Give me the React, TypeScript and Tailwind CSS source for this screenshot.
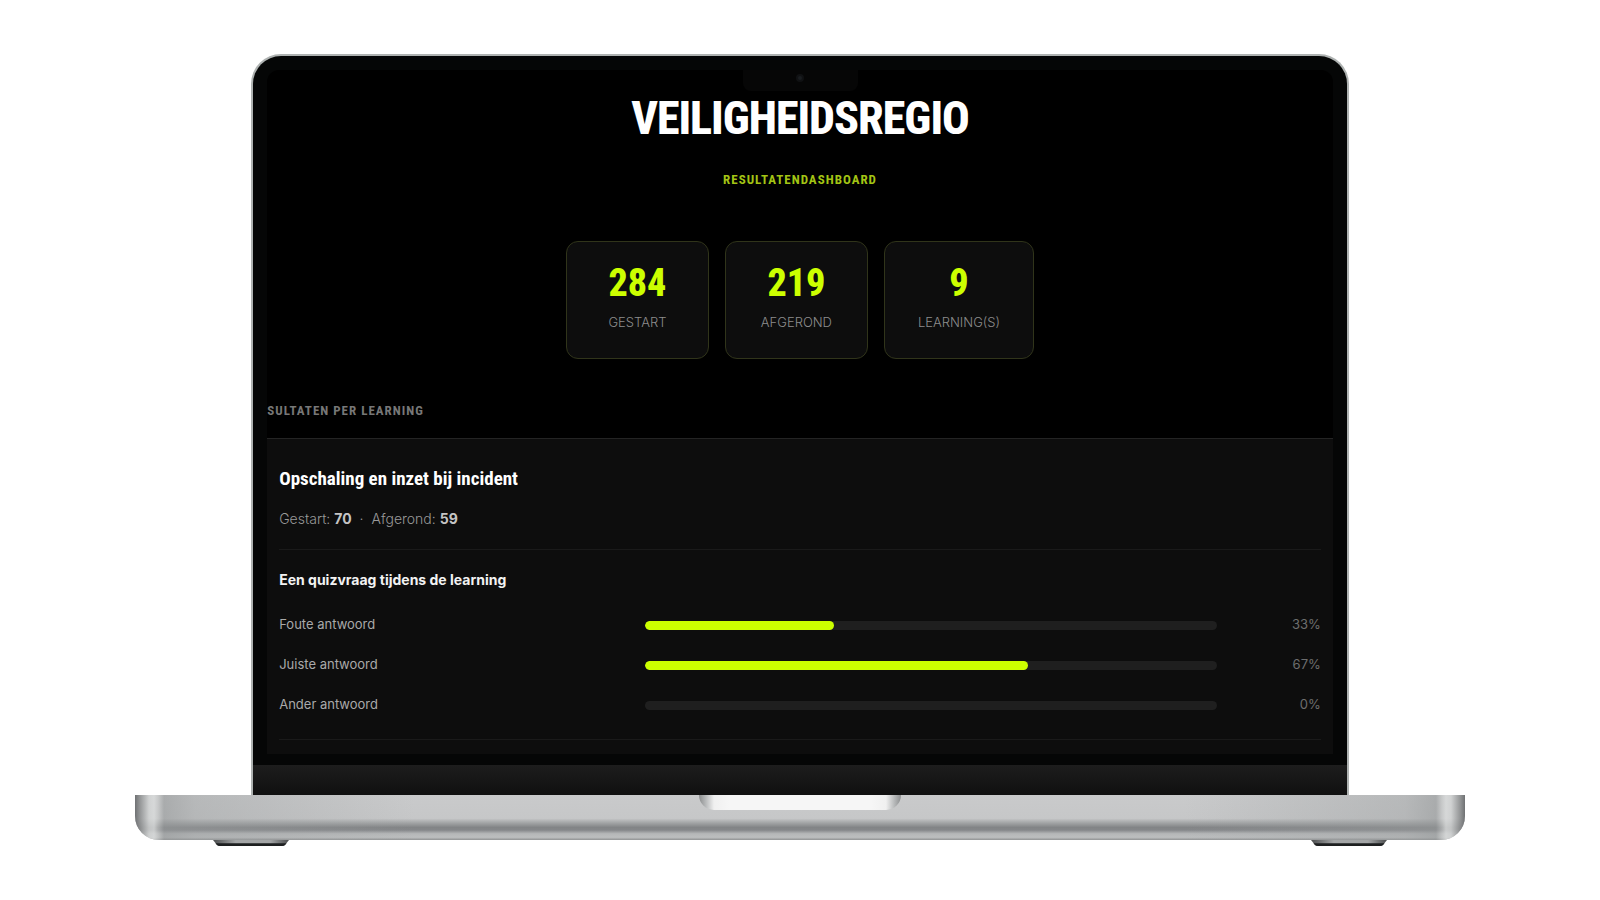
const STATS = [
  { value: "284", label: "Gestart" },
  { value: "219", label: "Afgerond" },
  { value: "9", label: "Learning(s)" },
];

const ANSWERS = [
  { label: "Foute antwoord", percent: 33 },
  { label: "Juiste antwoord", percent: 67 },
  { label: "Ander antwoord", percent: 0 },
];

function StatCard({ value, label }: { value: string; label: string }) {
  return (
    <div className="flex min-w-[143px] flex-col items-center gap-[7px] rounded-xl border border-[#30341a] bg-[#0d0d0d] px-[33px] pt-[19px] pb-[26px]">
      <span className="font-['Roboto_Condensed','Liberation_Sans_Narrow',sans-serif] text-[38px] leading-[44px] font-extrabold text-[#ccff00]">
        {value}
      </span>
      <span className="text-[13px] leading-5 font-light text-[#8c8c8c] uppercase">
        {label}
      </span>
    </div>
  );
}

function AnswerRow({ label, percent }: { label: string; percent: number }) {
  return (
    <li className="grid h-10 grid-cols-[366fr_571fr_104fr] items-center text-[13px]">
      <span className="text-[#a9a9a9]">{label}</span>
      <div
        role="progressbar"
        aria-label={label}
        aria-valuenow={percent}
        className="h-[9px] overflow-hidden rounded-full bg-[#1f1f1f]"
      >
        <div className="h-full rounded-full bg-[#ccff00]" style={{ width: `${percent}%` }} />
      </div>
      <span className="text-right text-[#6d6d6d]">{percent}%</span>
    </li>
  );
}

function Dashboard() {
  return (
    <main className="overflow-hidden rounded-t-xl bg-black">
      <header className="flex flex-col items-center pt-5">
        <h1 className="font-['Roboto_Condensed','Liberation_Sans_Narrow',sans-serif] text-[46px] leading-[56px] font-extrabold tracking-[-1px] text-white uppercase">
          Veiligheidsregio
        </h1>
        <p className="mt-6 font-['Roboto_Condensed','Liberation_Sans_Narrow',sans-serif] text-[13px] leading-5 font-bold tracking-[1px] text-[#a3c414] uppercase">
          Resultatendashboard
        </p>
        <div className="mt-[51px] flex gap-4">
          {STATS.map((s) => (
            <StatCard key={s.label} {...s} />
          ))}
        </div>
      </header>

      <h2 className="mt-[42px] mb-[17px] font-['Roboto_Condensed','Liberation_Sans_Narrow',sans-serif] text-[13px] leading-5 font-bold tracking-[1px] text-[#777] uppercase">
        sultaten per learning
      </h2>

      <section className="border-t border-[#242424] bg-[#0d0d0d] px-3 pt-6 pb-[14px]">
        <h3 className="font-['Roboto_Condensed','Liberation_Sans_Narrow',sans-serif] text-[19px] leading-8 font-bold text-white">
          Opschaling en inzet bij incident
        </h3>
        <p className="mt-3 flex gap-2 text-sm leading-6 font-light text-[#999]">
          <span>
            Gestart: <strong className="font-bold text-[#c4c4c4]">70</strong>
          </span>
          <span>·</span>
          <span>
            Afgerond: <strong className="font-bold text-[#c4c4c4]">59</strong>
          </span>
        </p>

        <div className="mt-[18px] border-y border-[#1a1a1a] pt-[18px] pb-[14px]">
          <h4 className="text-sm leading-6 font-bold text-[#f2f2f2]">
            Een quizvraag tijdens de learning
          </h4>
          <ul className="mt-[13px]">
            {ANSWERS.map((a) => (
              <AnswerRow key={a.label} {...a} />
            ))}
          </ul>
        </div>
      </section>
    </main>
  );
}

function Lid() {
  return (
    <div className="w-[68.6%] overflow-hidden rounded-t-[30px] border-2 border-b-0 border-[#aeb2b1] bg-[#050606]">
      <div className="relative px-[14px] pt-[14px] pb-[11px]">
        <Dashboard />
        {/* Camera notch */}
        <div className="absolute inset-x-0 top-[14px] mx-auto h-[21px] w-[115px] rounded-b-lg bg-[#060606] pt-1">
          <span className="mx-auto block size-2 rounded-full border-2 border-[#101113] bg-[#1a1d20]" />
        </div>
      </div>
      <div className="h-[30px] bg-linear-to-b from-[#1d1d1d] to-[#101010]" />
    </div>
  );
}

function Foot() {
  return (
    <svg viewBox="0 0 76 6" className="h-[6px] w-[76px]" aria-hidden>
      <defs>
        <linearGradient id="foot" x1="0" x2="1" y1="0" y2="0">
          <stop offset="0" stopColor="#4a4c4d" />
          <stop offset="0.3" stopColor="#a4a6a7" />
          <stop offset="0.75" stopColor="#a4a6a7" />
          <stop offset="1" stopColor="#4a4c4d" />
        </linearGradient>
      </defs>
      <path d="M0 0h76l-4 5q-1 1-3 1H7q-2 0-3-1z" fill="url(#foot)" />
      <path d="M2.5 3.2h71l-1.5 1.8q-1 1-3 1H7q-2 0-3-1z" fill="#1d1f20" />
    </svg>
  );
}

function Base() {
  return (
    <div className="w-[83.125%]">
      <div className="h-[45px] overflow-hidden rounded-b-[24px] bg-[linear-gradient(to_bottom,#c9cacb_0%,#c6c7c8_52%,#a9abac_60%,#828486_72%,#85878a_78%,#b5b7b8_86%,#bcbebf_94%,#909293_100%)]">
        <div className="h-full bg-[linear-gradient(to_right,#6f7173_0px,#8d8f90dd_5px,#d2d4d4cc_14px,#dadcdccc_19px,#c8caca99_23px,#95989999_29px,#9c9fa066_60px,#a9abac00_280px,#a9abac00_calc(100%-280px),#9c9fa066_calc(100%-60px),#95989999_calc(100%-29px),#c8caca99_calc(100%-23px),#dadcdccc_calc(100%-19px),#d2d4d4cc_calc(100%-14px),#8d8f90dd_calc(100%-5px),#6f7173_100%)]">
          <div className="mx-auto h-[15px] w-[202px] rounded-b-[15px] bg-[linear-gradient(to_right,#8c8e8f_0px,#b9bbbc_7px,#f0f0f0_15px,#f6f6f6_30px,#f6f6f6_172px,#f0f0f0_187px,#b9bbbc_195px,#8c8e8f_202px)]" />
        </div>
      </div>
      <div className="flex justify-between px-[78px]">
        <Foot />
        <Foot />
      </div>
    </div>
  );
}

export default function App() {
  return (
    <div className="flex min-h-screen flex-col items-center bg-white pt-[54px] font-['Inter',sans-serif]">
      <Lid />
      <Base />
    </div>
  );
}
